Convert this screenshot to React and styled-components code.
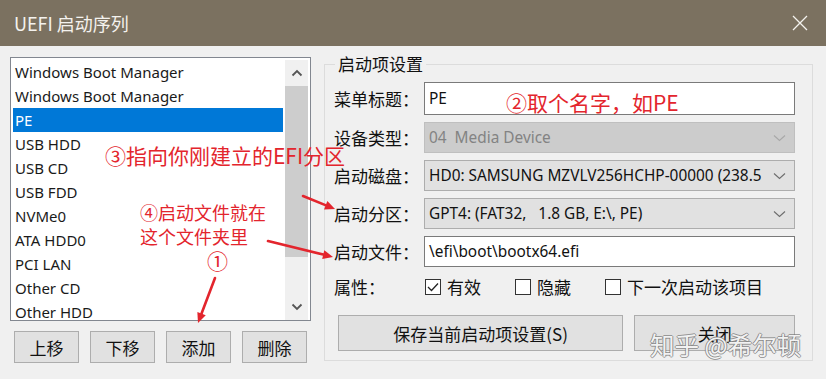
import styled, { createGlobalStyle } from "styled-components";

const GlobalStyle = createGlobalStyle`
    html, body {
        margin: 0;
        padding: 0;
        background: #f0f0f0;
    }
    * {
        box-sizing: border-box;
    }
`;

const UI_FONT = `"Noto Sans", "Noto Sans CJK SC", sans-serif`;
const CJK_FONT = `"Noto Sans CJK SC", "Noto Sans", sans-serif`;
const RED = "#e3252d";

const Window = styled.div`
    position: relative;
    width: 826px;
    height: 379px;
    display: flex;
    flex-direction: column;
    background: #f0f0f0;
    font-family: ${UI_FONT};
    color: #000;
    overflow: hidden;
`;

const TitleBar = styled.div`
    height: 46px;
    flex: none;
    display: flex;
    align-items: center;
    justify-content: space-between;
    padding: 0 18px 0 14px;
    background: #7b7160;
    color: #f4f2ee;
    font-family: ${CJK_FONT};
    font-size: 18px;
`;

const CloseIcon = styled.svg`
    width: 16px;
    height: 16px;
`;

const Body = styled.div`
    flex: 1;
    display: flex;
    gap: 13px;
    padding: 11px 13px 0 10px;
`;

const LeftColumn = styled.div`
    width: 301px;
    flex: none;
    display: flex;
    flex-direction: column;
`;

const ListBox = styled.div`
    height: 264px;
    display: flex;
    border: 1px solid #828790;
    background: #fff;
    padding: 2px 2px 0 2px;
    overflow: hidden;
`;

const Items = styled.div`
    width: 270px;
`;

const Item = styled.div`
    height: 24px;
    display: flex;
    align-items: center;
    padding-left: 2px;
    font-size: 15px;
    white-space: nowrap;
    background: ${(p) => (p.$selected ? "#0078d7" : "transparent")};
    color: ${(p) => (p.$selected ? "#fff" : "#1a1a1a")};
`;

const ScrollBar = styled.div`
    width: 23px;
    margin-left: 2px;
    display: flex;
    flex-direction: column;
    background: #f0f0f0;
`;

const ScrollArrow = styled.div`
    height: 26px;
    flex: none;
    display: flex;
    align-items: center;
    justify-content: center;
`;

const ScrollTrack = styled.div`
    flex: 1;
    display: flex;
    flex-direction: column;
`;

const ScrollThumb = styled.div`
    height: 171px;
    background: #cdcdcd;
`;

const ButtonRow = styled.div`
    display: flex;
    gap: 11px;
    margin-top: 10px;
    padding-left: 4px;
`;

const Button = styled.div`
    width: ${(p) => p.$width}px;
    height: ${(p) => p.$height || 32}px;
    display: flex;
    align-items: center;
    justify-content: center;
    background: #e1e1e1;
    border: 1px solid #adadad;
    font-family: ${CJK_FONT};
    font-size: 17px;
    color: #111;
`;

const GroupBox = styled.fieldset`
    flex: 1;
    margin: -3px 0 0 0;
    height: 307px;
    border: 1px solid #dcdcdc;
    padding: 8px 17px 0 9px;
    min-width: 0;
`;

const Legend = styled.legend`
    padding: 0 3px;
    margin-left: 1px;
    font-family: ${CJK_FONT};
    font-size: 17px;
    line-height: 20px;
    color: #111;
`;

const FormGrid = styled.div`
    display: grid;
    grid-template-columns: 90px minmax(0, 1fr);
    row-gap: 7px;
    align-items: center;
`;

const Label = styled.div`
    font-family: ${CJK_FONT};
    font-size: 17px;
    color: #111;
    white-space: nowrap;
`;

const TextBox = styled.div`
    height: ${(p) => p.$height}px;
    display: flex;
    align-items: center;
    padding-left: 4px;
    background: #fff;
    border: 1px solid #7a7a7a;
    font-size: 15.4px;
    color: #111;
`;

const ComboBox = styled.div`
    height: 31px;
    min-width: 0;
    display: flex;
    align-items: center;
    padding: 0 8px 0 4px;
    gap: 10px;
    background: ${(p) => (p.$disabled ? "#cccccc" : "#e1e1e1")};
    border: 1px solid ${(p) => (p.$disabled ? "#bfbfbf" : "#adadad")};
    color: ${(p) => (p.$disabled ? "#838383" : "#111")};
    font-size: 15.4px;
`;

const ComboText = styled.span`
    flex: 1;
    min-width: 0;
    white-space: pre;
    overflow: hidden;
`;

const Chevron = styled.svg`
    width: 13px;
    height: 8px;
    flex: none;
`;

const CheckRow = styled.div`
    display: flex;
    gap: 34px;
    padding-left: 1px;
    height: 20px;
    align-items: center;
`;

const Check = styled.label`
    display: flex;
    align-items: center;
    gap: 6px;
    font-family: ${CJK_FONT};
    font-size: 17px;
    color: #111;
`;

const Box = styled.span`
    width: 16px;
    height: 16px;
    border: 1px solid #333;
    background: #fff;
    display: flex;
    align-items: center;
    justify-content: center;
`;

const ActionRow = styled.div`
    display: flex;
    gap: 11px;
    margin-top: 16px;
    padding-left: 4px;
`;

const Note = styled.div`
    position: absolute;
    left: ${(p) => p.$x}px;
    top: ${(p) => p.$y}px;
    font-family: ${CJK_FONT};
    font-size: ${(p) => p.$size || 21}px;
    line-height: ${(p) => p.$lh || 24}px;
    color: ${RED};
    white-space: nowrap;
    pointer-events: none;
`;

const Watermark = styled.div`
    position: absolute;
    left: 650px;
    top: 330px;
    font-family: ${CJK_FONT};
    font-size: 24.5px;
    line-height: 30px;
    color: rgba(255, 255, 255, 0.92);
    text-shadow:
        1px 0 0 rgba(120, 120, 120, 0.7),
        -1px 0 0 rgba(120, 120, 120, 0.7),
        0 1px 0 rgba(120, 120, 120, 0.7),
        0 -1px 0 rgba(120, 120, 120, 0.7);
    white-space: nowrap;
    pointer-events: none;
`;

const ArrowLayer = styled.svg`
    position: absolute;
    left: 0;
    top: 0;
    width: 826px;
    height: 379px;
    pointer-events: none;
`;

const entries = [
    "Windows Boot Manager",
    "Windows Boot Manager",
    "PE",
    "USB HDD",
    "USB CD",
    "USB FDD",
    "NVMe0",
    "ATA HDD0",
    "PCI LAN",
    "Other CD",
    "Other HDD",
];

function ChevronDown({ color = "#6d6d6d" }) {
    return (
        <Chevron viewBox="0 0 13 8">
            <path d="M1 1.5 L6.5 6.5 L12 1.5" fill="none" stroke={color} strokeWidth="1.1" />
        </Chevron>
    );
}

function Arrow({ x1, y1, x2, y2 }) {
    const angle = Math.atan2(y2 - y1, x2 - x1);
    const len = 11;
    const spread = 0.42;
    const bx = x2 - Math.cos(angle) * (len - 2);
    const by = y2 - Math.sin(angle) * (len - 2);
    const p1 = [x2 - Math.cos(angle - spread) * len, y2 - Math.sin(angle - spread) * len];
    const p2 = [x2 - Math.cos(angle + spread) * len, y2 - Math.sin(angle + spread) * len];
    return (
        <g>
            <line x1={x1} y1={y1} x2={bx} y2={by} stroke={RED} strokeWidth="2.6" strokeLinecap="round" />
            <polygon points={`${x2},${y2} ${p1[0]},${p1[1]} ${p2[0]},${p2[1]}`} fill={RED} />
        </g>
    );
}

function CheckItem({ checked, children }) {
    return (
        <Check>
            <Box>
                {checked && (
                    <svg width="12" height="10" viewBox="0 0 12 10">
                        <path d="M1 5 L4.5 8.5 L11 1.5" fill="none" stroke="#222" strokeWidth="1.3" />
                    </svg>
                )}
            </Box>
            {children}
        </Check>
    );
}

export default function App() {
    return (
        <Window>
            <GlobalStyle />
            <TitleBar>
                <span>UEFI 启动序列</span>
                <CloseIcon viewBox="0 0 16 16">
                    <path d="M1 1 L15 15 M15 1 L1 15" stroke="#f4f2ee" strokeWidth="1.3" />
                </CloseIcon>
            </TitleBar>
            <Body>
                <LeftColumn>
                    <ListBox>
                        <Items>
                            {entries.map((name, i) => (
                                <Item key={i} $selected={i === 2}>{name}</Item>
                            ))}
                        </Items>
                        <ScrollBar>
                            <ScrollArrow>
                                <svg width="12" height="8" viewBox="0 0 12 8">
                                    <path d="M1.5 6.5 L6 2 L10.5 6.5" fill="none" stroke="#555" strokeWidth="1.8" />
                                </svg>
                            </ScrollArrow>
                            <ScrollTrack>
                                <ScrollThumb />
                            </ScrollTrack>
                            <ScrollArrow>
                                <svg width="12" height="8" viewBox="0 0 12 8">
                                    <path d="M1.5 1.5 L6 6 L10.5 1.5" fill="none" stroke="#555" strokeWidth="1.8" />
                                </svg>
                            </ScrollArrow>
                        </ScrollBar>
                    </ListBox>
                    <ButtonRow>
                        <Button $width={65}>上移</Button>
                        <Button $width={65}>下移</Button>
                        <Button $width={65}>添加</Button>
                        <Button $width={65}>删除</Button>
                    </ButtonRow>
                </LeftColumn>

                <GroupBox>
                    <Legend>启动项设置</Legend>
                    <FormGrid>
                        <Label>菜单标题：</Label>
                        <TextBox $height={33}>PE</TextBox>

                        <Label>设备类型：</Label>
                        <ComboBox $disabled>
                            <ComboText>04  Media Device</ComboText>
                            <ChevronDown color="#a8a8a8" />
                        </ComboBox>

                        <Label>启动磁盘：</Label>
                        <ComboBox>
                            <ComboText>HD0: SAMSUNG MZVLV256HCHP-00000 (238.5 GB)</ComboText>
                            <ChevronDown />
                        </ComboBox>

                        <Label>启动分区：</Label>
                        <ComboBox>
                            <ComboText>GPT4: (FAT32,   1.8 GB, E:\, PE)</ComboText>
                            <ChevronDown />
                        </ComboBox>

                        <Label>启动文件：</Label>
                        <TextBox $height={31}>\efi\boot\bootx64.efi</TextBox>

                        <Label>属性：</Label>
                        <CheckRow>
                            <CheckItem checked>有效</CheckItem>
                            <CheckItem>隐藏</CheckItem>
                            <CheckItem>下一次启动该项目</CheckItem>
                        </CheckRow>
                    </FormGrid>
                    <ActionRow>
                        <Button $width={286} $height={36}>保存当前启动项设置(S)</Button>
                        <Button $width={161} $height={36}>关闭</Button>
                    </ActionRow>
                </GroupBox>
            </Body>

            <Note $x={105} $y={143}>③指向你刚建立的EFI分区</Note>
            <Note $x={506} $y={90}>②取个名字，如PE</Note>
            <Note $x={140} $y={200} $size={18}>④启动文件就在<br />这个文件夹里</Note>
            <Note $x={207} $y={248}>①</Note>
            <Watermark>知乎 @希尔顿</Watermark>

            <ArrowLayer viewBox="0 0 826 379">
                <Arrow x1={303} y1={196} x2={335} y2={209} />
                <Arrow x1={268} y1={241} x2={333} y2={257} />
                <Arrow x1={215} y1={278} x2={198} y2={323} />
            </ArrowLayer>
        </Window>
    );
}
